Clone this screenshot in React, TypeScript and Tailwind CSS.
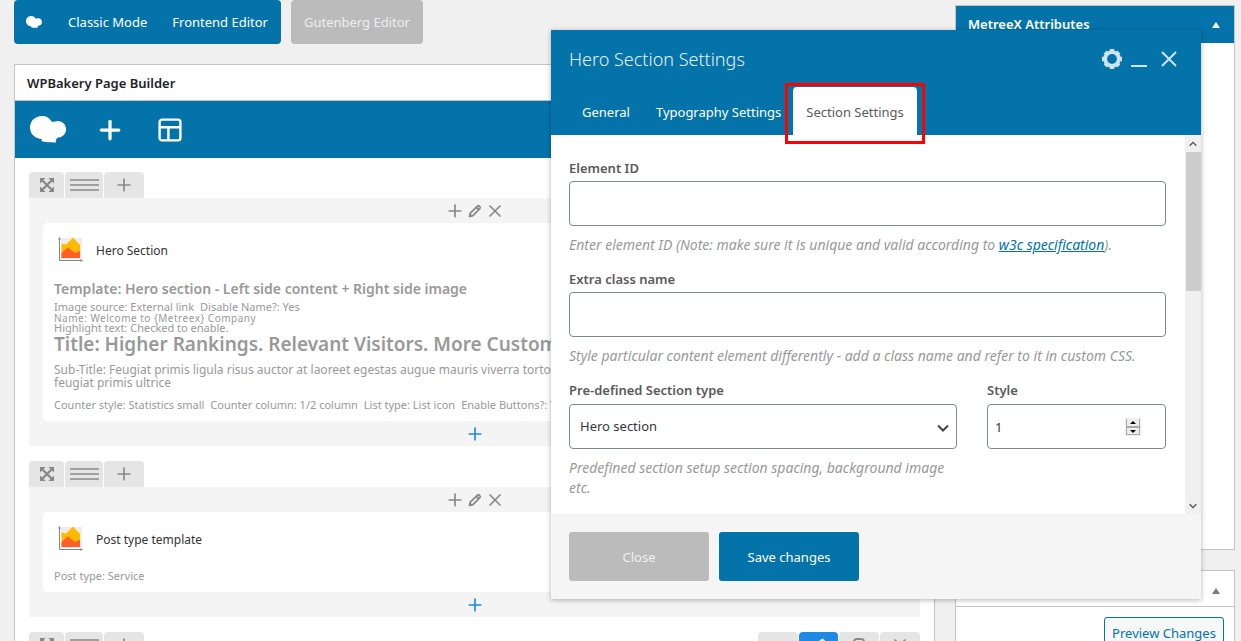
import { Plus, X } from "lucide-react";

const sections = [
    { id: "hero", title: "Hero Section" },
    { id: "post", title: "Post type template" },
];

const BakeryLogo = ({ className }: { className: string }) => (
    <svg viewBox="0 0 36 27" className={className} fill="currentColor" aria-hidden="true">
        <path d="M12 0C16.6 0 19.8 2 21.6 5.6C23.6 6.3 25 5.2 27.6 5C32.6 5 36 8.6 36 13.3C36 18.2 32.4 21.6 27.2 21.8C26.2 23.4 25.6 25 25.6 27C22.8 25.4 16.6 27 12.6 25.6C11.4 25 11 24 12.2 23C5 23 0 18 0 11.6C0 5 5 0 12 0Z" />
    </svg>
);

const LayoutIcon = () => (
    <svg width="24" height="24" viewBox="0 0 24 24" fill="none" stroke="currentColor" strokeWidth="2.4" aria-hidden="true">
        <rect x="1.6" y="1.6" width="20.8" height="20.8" rx="2.4" />
        <path d="M1.6 9.2H22.4M10.4 9.2V22.4" />
    </svg>
);

const ExpandIcon = () => (
    <svg width="14" height="14" viewBox="0 0 14 14" aria-hidden="true">
        <path d="M2 2L12 12M12 2L2 12" stroke="currentColor" strokeWidth="2.2" />
        <path d="M0 0H5.6L0 5.6ZM14 0V5.6L8.4 0ZM0 14V8.4L5.6 14ZM14 14H8.4L14 8.4Z" fill="currentColor" />
    </svg>
);

const PencilIcon = () => (
    <svg width="14" height="14" viewBox="0 0 16 16" fill="none" stroke="currentColor" strokeWidth="2" strokeLinejoin="round" aria-hidden="true">
        <path d="M2.6 10.4L10.8 2.4Q12 1.4 13.3 2.7Q14.6 4 13.6 5.2L5.6 13.4L1.8 14.2Z" />
        <path d="M1.4 14.8L2.4 11.2L4.8 13.6Z" fill="currentColor" strokeWidth="1" />
        <path d="M9.4 3.6L12.4 6.6" strokeWidth="2.2" />
    </svg>
);

const GearIcon = () => (
    <svg width="22" height="22" viewBox="0 0 22 22" fill="none" stroke="currentColor" aria-hidden="true">
        <circle cx="11" cy="11" r="6.8" strokeWidth="3.8" />
        <path
            d="M11 1V3.4M11 18.6V21M1 11H3.4M18.6 11H21M4.1 4.1L5.6 5.6M16.4 16.4L17.9 17.9M4.1 17.9L5.6 16.4M16.4 5.6L17.9 4.1"
            strokeWidth="4.4"
        />
    </svg>
);

const ChartIcon = () => (
    <svg width="25" height="26" viewBox="0 0 25 26" aria-hidden="true">
        <rect x="3" y="1" width="21" height="21" fill="#ededf0" />
        <path d="M3.5 6.5L8 7.5L15 .5L22 8V21H3.5Z" fill="#ffb900" />
        <path d="M3.5 16L10 10.5L17 16L22 14V21H3.5Z" fill="#ff5f26" />
        <path d="M1.5 1V23.5H24" fill="none" stroke="#858585" />
        <path d="M0 2.5L1.5 0L3 2.5ZM22.5 22L25 23.5L22.5 25Z" fill="#858585" />
    </svg>
);

const Chevron = ({ className, up = false }: { className?: string; up?: boolean }) => (
    <svg width="12" height="8" viewBox="0 0 12 8" fill="none" stroke="currentColor" strokeWidth="2" className={className} aria-hidden="true">
        <path d={up ? "M1 6.5L6 1.5L11 6.5" : "M1 1.5L6 6.5L11 1.5"} />
    </svg>
);

const Triangle = () => (
    <svg width="8" height="6" viewBox="0 0 8 6" fill="currentColor" aria-hidden="true">
        <path d="M0 6L4 0L8 6Z" />
    </svg>
);

const RowTabs = () => (
    <div className="flex h-[26px] gap-px text-[#888]">
        <button aria-label="Move row" className="flex w-[35px] items-center justify-center rounded-t-sm bg-[#e5e5e5]">
            <ExpandIcon />
        </button>
        <button aria-label="Row layout" className="flex w-[38px] flex-col items-center justify-center gap-[3px] rounded-t-sm bg-[#e5e5e5]">
            <span className="h-0.5 w-[29px] bg-[#a0a0a0]" />
            <span className="h-0.5 w-[29px] bg-[#a0a0a0]" />
            <span className="h-0.5 w-[29px] bg-[#a0a0a0]" />
        </button>
        <button aria-label="Add column" className="flex w-10 items-center justify-center rounded-t-sm bg-[#e5e5e5]">
            <Plus size={20} strokeWidth={2} />
        </button>
    </div>
);

const HeroSummary = () => (
    <>
        <h4 className="text-sm leading-5 font-semibold">Template: Hero section - Left side content + Right side image</h4>
        <p className="mt-0.5 flex gap-1.5 text-[11px] leading-3">
            <span>Image source: External link</span>
            <span>Disable Name?: Yes</span>
        </p>
        <p className="text-[10px] leading-[10px] tracking-wider">Name: Welcome to {"{Metreex}"} Company</p>
        <p className="text-[11px] leading-[10px]">Highlight text: Checked to enable.</p>
        <h2 className="text-[19px] leading-[22px] font-semibold whitespace-nowrap">
            Title: Higher Rankings. Relevant Visitors. More Customers.
        </h2>
        <p className="mt-2 text-xs leading-[13px]">
            Sub-Title: Feugiat primis ligula risus auctor at laoreet egestas augue mauris viverra tortor
            <br />
            feugiat primis ultrice
        </p>
        <p className="mt-2 flex gap-1.5 text-[11px] leading-4 whitespace-nowrap">
            <span>Counter style: Statistics small</span>
            <span>Counter column: 1/2 column</span>
            <span>List type: List icon</span>
            <span>Enable Buttons?: Yes</span>
        </p>
    </>
);

const BuilderRow = ({ id, title }: { id: string; title: string }) => (
    <div className="mb-[15px]">
        <RowTabs />
        <div className="bg-[#f4f4f4] px-3.5">
            <div className="flex h-[25px] items-center justify-center text-[#888]">
                <button aria-label="Prepend element"><Plus size={20} /></button>
                <button aria-label="Edit column" className="mx-[3px]"><PencilIcon /></button>
                <button aria-label="Delete column"><X size={20} /></button>
            </div>
            <article className="overflow-hidden rounded-sm bg-white px-[11px] pt-3.5 pb-2 text-[#999]">
                <header className="mb-4 flex h-[26px] items-center gap-[13px] pl-1 text-xs text-[#333]">
                    <ChartIcon />
                    <h3 className="pt-0.5">{title}</h3>
                </header>
                {id === "hero" ? <HeroSummary /> : <p className="text-[11px] leading-4">Post type: Service</p>}
            </article>
            <div className="flex h-[25px] items-center justify-center text-[#1e88e5]">
                <button aria-label="Append element"><Plus size={20} strokeWidth={2} /></button>
            </div>
        </div>
    </div>
);

const Builder = () => (
    <main className="min-w-0 flex-1">
        <div className="flex gap-2.5 text-[13px] text-white">
            <div className="flex h-11 w-[267px] items-center justify-between rounded bg-[#0473aa] pr-[13px] pl-3">
                <BakeryLogo className="h-3 w-4" />
                <div className="flex gap-[25px] pt-0.5">
                    <button>Classic Mode</button>
                    <button>Frontend Editor</button>
                </div>
            </div>
            <button className="h-11 w-[132px] rounded bg-[#bbb] pt-0.5 text-[#eee]">Gutenberg Editor</button>
        </div>
        <section className="mt-5 border border-[#c3c4c7] bg-white">
            <h2 className="h-9 border-b border-[#c3c4c7] px-3 text-[13px] leading-[37px] font-semibold text-[#1d2327]">
                WPBakery Page Builder
            </h2>
            <div className="flex h-[57px] items-center bg-[#0473aa] px-[15px] text-white">
                <BakeryLogo className="h-[27px] w-9" />
                <button aria-label="Add element" className="ml-[29px]"><Plus size={30} strokeWidth={2.6} /></button>
                <button aria-label="Templates" className="ml-[33px]"><LayoutIcon /></button>
            </div>
            <div className="px-3.5 pt-3.5">
                {sections.map((section) => (
                    <BuilderRow key={section.id} {...section} />
                ))}
                <div className="flex justify-between">
                    <RowTabs />
                    <div className="flex h-[26px] gap-px text-[#888]">
                        <span className="w-10 rounded-t-sm bg-[#e5e5e5]" />
                        <button aria-label="Edit row" className="flex w-[39px] items-center justify-center rounded-t-sm bg-[#1e88e5] text-white"><PencilIcon /></button>
                        <button aria-label="Clone row" className="flex w-10 items-center justify-center rounded-t-sm bg-[#e5e5e5]">
                            <span className="h-3.5 w-3 rounded border-2 border-[#888]" />
                        </button>
                        <button aria-label="Delete row" className="flex w-10 items-center justify-center rounded-t-sm bg-[#e5e5e5]"><X size={20} /></button>
                    </div>
                </div>
            </div>
        </section>
    </main>
);

const Sidebar = () => (
    <aside className="w-[280px] pt-[5px]">
        <section className="border border-[#c3c4c7] bg-white">
            <header className="flex h-[37px] items-center justify-between bg-[#0473aa] pr-3.5 pl-3 text-white">
                <h2 className="text-[13px] font-semibold">MetreeX Attributes</h2>
                <button aria-label="Toggle attributes"><Triangle /></button>
            </header>
            <div className="h-[506px]" />
        </section>
        <section className="mt-5 border border-[#c3c4c7] bg-white">
            <header className="flex h-9 items-center justify-end border-b border-[#c3c4c7] pt-1 pr-3.5 text-[#787c82]">
                <button aria-label="Toggle publish"><Triangle /></button>
            </header>
            <div className="flex justify-end p-2.5">
                <button className="h-8 w-[120px] rounded-[3px] border border-[#0473aa] bg-[#f6f7f7] pt-0.5 text-[13px] whitespace-nowrap text-[#0473aa]">
                    Preview Changes
                </button>
            </div>
        </section>
    </aside>
);

const fieldClass = "block h-[45px] w-full rounded border border-[#7e8993] bg-white text-[13px] text-[#32373c]";
const labelClass = "block text-[13px] leading-5 font-semibold text-[#5a5a5a]";
const hintClass = "mt-[9px] text-sm leading-5 text-[#999] italic";

const SettingsDialog = () => (
    <div role="dialog" aria-label="Hero Section Settings" className="absolute top-[30px] right-10 w-[650px] bg-white shadow-[0_1px_5px_rgba(0,0,0,0.3)]">
        <header className="bg-[#0473aa] text-white">
            <div className="flex h-[57px] items-center justify-between pr-[22px] pl-[18px]">
                <h2 className="text-lg font-light text-[#e6f1f7]">Hero Section Settings</h2>
                <div className="flex items-center text-[#cde3ee]">
                    <button aria-label="Options"><GearIcon /></button>
                    <button aria-label="Minimize" className="ml-2 flex h-4 w-4 items-end"><span className="h-0.5 w-full bg-current" /></button>
                    <button aria-label="Close dialog" className="ml-3">
                        <svg width="20" height="20" viewBox="0 0 20 20" stroke="currentColor" strokeWidth="2" aria-hidden="true">
                            <path d="M3 3L17 17M17 3L3 17" />
                        </svg>
                    </button>
                </div>
            </div>
            <div role="tablist" className="flex h-12 pl-[18px] text-[13px]">
                <button role="tab" aria-selected="false" className="px-[13px] pt-1">General</button>
                <button role="tab" aria-selected="false" className="pt-1 pr-3 pl-[13px]">Typography Settings</button>
                <button role="tab" aria-selected="true" className="relative rounded-t bg-white px-[13px] pt-1 text-[#5a5a5a]">
                    Section Settings
                    <span className="absolute -inset-x-2 -top-1 -bottom-[9px] border-[3px] border-[#f00]" />
                </button>
            </div>
        </header>
        <div className="flex">
            <form className="min-w-0 flex-1 pt-[23px] pr-[19px] pb-4 pl-[18px]">
                <label htmlFor="element-id" className={`mb-[3px] ${labelClass}`}>Element ID</label>
                <input id="element-id" type="text" className={fieldClass} />
                <p className={hintClass}>
                    Enter element ID (Note: make sure it is unique and valid according to{" "}
                    <a href="#spec" className="text-[#0473aa] underline">w3c specification</a>).
                </p>
                <label htmlFor="extra-class" className={`mt-3.5 mb-[3px] ${labelClass}`}>Extra class name</label>
                <input id="extra-class" type="text" className={fieldClass} />
                <p className={hintClass}>
                    Style particular content element differently - add a class name and refer to it in custom CSS.
                </p>
                <div className="mt-3.5 grid grid-cols-[388fr_179fr] gap-[30px]">
                    <div>
                        <label htmlFor="section-type" className={`mb-1 ${labelClass}`}>Pre-defined Section type</label>
                        <div className="relative">
                            <select id="section-type" className={`${fieldClass} appearance-none px-2.5`}>
                                <option>Hero section</option>
                            </select>
                            <Chevron className="pointer-events-none absolute top-5 right-2 text-[#444]" />
                        </div>
                        <p className={hintClass}>Predefined section setup section spacing, background image etc.</p>
                    </div>
                    <div>
                        <label htmlFor="section-style" className={`mb-1 ${labelClass}`}>Style</label>
                        <div className="relative">
                            <input id="section-style" type="number" defaultValue={1} className={`${fieldClass} [appearance:textfield] px-[7px]`} />
                            <div className="absolute top-3.5 right-[25px] flex flex-col bg-[#eee] p-px text-black">
                                <button type="button" aria-label="Increase" className="flex h-2 w-3.5 items-center justify-center border-x border-b border-[#aaa]">
                                    <svg width="6" height="3" viewBox="0 0 6 3"><path d="M0 3L3 0L6 3Z" /></svg>
                                </button>
                                <button type="button" aria-label="Decrease" className="flex h-2 w-3.5 items-center justify-center border border-[#aaa]">
                                    <svg width="6" height="3" viewBox="0 0 6 3"><path d="M0 0L3 3L6 0Z" /></svg>
                                </button>
                            </div>
                        </div>
                    </div>
                </div>
            </form>
            <div className="flex w-4 flex-col items-center bg-[#f0f0f0] text-[#505050]">
                <div className="flex h-[17px] items-center"><Chevron up className="h-1.5 w-2" /></div>
                <div className="h-[139px] w-[15px] bg-[#cdcdcd]" />
                <div className="mt-auto flex h-[17px] items-center"><Chevron className="h-1.5 w-2" /></div>
            </div>
        </div>
        <footer className="flex gap-2.5 bg-[#f5f5f5] p-[18px] text-[13px]">
            <button className="h-[49px] w-[140px] rounded-[3px] bg-[#bbb] pt-0.5 text-[#f0f0f0]">Close</button>
            <button className="h-[49px] w-[140px] rounded-[3px] bg-[#0473aa] pt-0.5 text-white">Save changes</button>
        </footer>
    </div>
);

const App = () => (
    <div className="relative flex h-screen gap-5 overflow-hidden bg-[#f0f0f1] pr-1.5 pl-3.5 font-['Noto_Sans','Open_Sans',sans-serif]">
        <Builder />
        <Sidebar />
        <SettingsDialog />
    </div>
);

export default App;
